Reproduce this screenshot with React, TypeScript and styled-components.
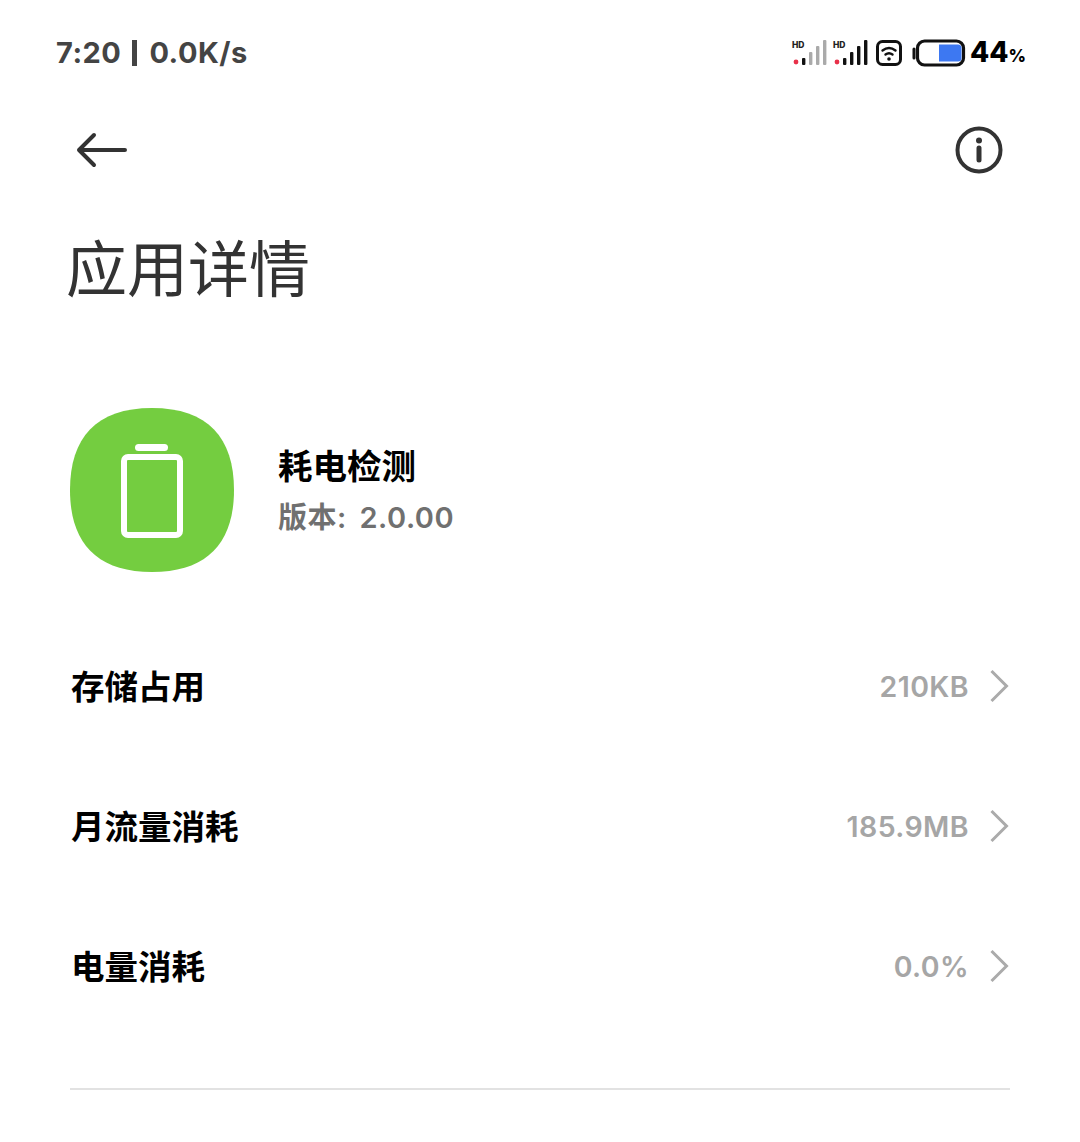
import styled, { createGlobalStyle } from "styled-components";

const GlobalStyle = createGlobalStyle`
  html, body {
    margin: 0;
    padding: 0;
    background: #fff;
    font-family: Inter, "Noto Sans CJK SC", sans-serif;
  }
`;

const FONT = `Inter, "Noto Sans CJK SC", sans-serif`;
const CJK = `"Noto Sans CJK SC", sans-serif`;

const Page = styled.div`
  width: 1080px;
  height: 1142px;
  background: #fff;
  overflow: hidden;
  box-sizing: border-box;
`;

const StatusBar = styled.div`
  height: 104px;
  padding: 37px 55px 0 56px;
  box-sizing: border-box;
  display: flex;
  justify-content: space-between;
  align-items: flex-start;
`;

const Clock = styled.div`
  display: flex;
  align-items: center;
  font-family: ${FONT};
  font-size: 29px;
  line-height: 32px;
  font-weight: 700;
  color: #444;
  letter-spacing: 0.5px;
  white-space: pre;
`;

const ClockBar = styled.span`
  width: 5px;
  height: 26px;
  margin: 0 12px 0 11px;
  background: #444;
`;

const StatusIcons = styled.div`
  display: flex;
  align-items: center;
  height: 32px;
`;

const IconSlot = styled.div<{ $left: number }>`
  display: flex;
  margin-left: ${(p) => p.$left}px;
`;

const BatteryText = styled.div`
  width: 55px;
  font-family: ${FONT};
  font-size: 28px;
  line-height: 32px;
  font-weight: 800;
  color: #000;
  margin-left: 4px;
  padding-top: 2px;
  white-space: nowrap;
  span {
    font-size: 17px;
  }
`;

const NavBar = styled.div`
  height: 92px;
  padding: 0 77px 0 76px;
  display: flex;
  justify-content: space-between;
  align-items: center;
  box-sizing: border-box;
`;

const Title = styled.h1`
  margin: 0;
  padding: 26px 0 0 66px;
  font-family: ${CJK};
  font-size: 61px;
  line-height: 88px;
  font-weight: 400;
  color: #333;
`;

const AppHeader = styled.div`
  margin-top: 98px;
  padding-left: 70px;
  display: flex;
  align-items: center;
  gap: 44px;
`;

const AppName = styled.div`
  font-family: ${CJK};
  font-size: 34.5px;
  line-height: 44px;
  font-weight: 700;
  color: #000;
`;

const AppVersion = styled.div`
  font-family: ${FONT};
  font-size: 29px;
  line-height: 40px;
  font-weight: 600;
  color: #707070;
  margin-top: 12px;
  letter-spacing: 0.5px;
  word-spacing: 5px;
`;

const List = styled.div`
  margin-top: 42px;
`;

const Row = styled.div`
  height: 140px;
  padding: 0 71px 0 71px;
  display: flex;
  align-items: center;
  justify-content: space-between;
  box-sizing: border-box;
`;

const RowLabel = styled.div`
  font-family: ${CJK};
  font-size: 33.5px;
  font-weight: 700;
  color: #000;
`;

const RowValue = styled.div`
  display: flex;
  align-items: center;
  gap: 20px;
  font-family: ${FONT};
  font-size: 28.5px;
  font-weight: 600;
  color: #a6a6a6;
  letter-spacing: 0.4px;
  padding-top: 4px;
`;

const Divider = styled.div`
  height: 2px;
  margin: 54px 70px 0;
  background: #e2e2e2;
`;

function Signal({ active }: { active: boolean }) {
  const off = active ? "#111" : "#aaa";
  return (
    <svg width="36" height="28" viewBox="0 0 36 28">
      <text x="1" y="8.5" fontFamily="Inter, sans-serif" fontSize="8.5" fontWeight="800" fill="#222">
        HD
      </text>
      <circle cx="5" cy="23" r="2.4" fill="#e8304a" />
      <rect x="11" y="19" width="3.4" height="7" rx="1" fill="#111" />
      <rect x="18" y="13" width="3.4" height="13" rx="1" fill={off} />
      <rect x="25" y="7" width="3.4" height="19" rx="1" fill={off} />
      <rect x="32" y="1" width="3.4" height="25" rx="1" fill={off} />
    </svg>
  );
}

function Wifi() {
  return (
    <svg width="26" height="26" viewBox="0 0 26 26" fill="none">
      <rect x="1.5" y="1.5" width="23" height="23" rx="5" stroke="#111" strokeWidth="3" />
      <path d="M6.5 10.5c4-3.2 9-3.2 13 0" stroke="#111" strokeWidth="2.4" strokeLinecap="round" />
      <path d="M9.5 14.5c2.2-1.6 4.8-1.6 7 0" stroke="#111" strokeWidth="2.4" strokeLinecap="round" />
      <circle cx="13" cy="19" r="1.8" fill="#111" />
    </svg>
  );
}

function Battery() {
  return (
    <svg width="54" height="28" viewBox="0 0 54 28" fill="none">
      <path d="M2 10v9" stroke="#111" strokeWidth="3" strokeLinecap="round" />
      <rect x="5.5" y="2" width="46" height="24" rx="7" stroke="#111" strokeWidth="3.2" />
      <path d="M27 5.5h19a3.5 3.5 0 0 1 3.5 3.5v10a3.5 3.5 0 0 1-3.5 3.5H27z" fill="#3d78f2" />
    </svg>
  );
}

function Chevron() {
  return (
    <svg width="20" height="34" viewBox="0 0 20 34" fill="none">
      <path d="M2.5 2l15 15-15 15" stroke="#ababab" strokeWidth="3" />
    </svg>
  );
}

function AppIcon() {
  return (
    <svg width="164" height="164" viewBox="0 0 164 164">
      <path
        d="M82 0C138 0 164 30 164 82C164 134 138 164 82 164C26 164 0 134 0 82C0 30 26 0 82 0Z"
        fill="#74cd40"
      />
      <rect x="65" y="36" width="33" height="7" rx="3.5" fill="#fff" />
      <rect x="54" y="49" width="56" height="78" rx="4" fill="none" stroke="#fff" strokeWidth="6" />
    </svg>
  );
}

const rows = [
  { label: "存储占用", value: "210KB" },
  { label: "月流量消耗", value: "185.9MB" },
  { label: "电量消耗", value: "0.0%" },
];

export default function App() {
  return (
    <Page>
      <GlobalStyle />
      <StatusBar>
        <Clock>
          7:20
          <ClockBar />
          0.0K/s
        </Clock>
        <StatusIcons>
          <Signal active={false} />
          <IconSlot $left={5}>
            <Signal active />
          </IconSlot>
          <IconSlot $left={8}>
            <Wifi />
          </IconSlot>
          <IconSlot $left={10}>
            <Battery />
          </IconSlot>
          <BatteryText>
            44<span>%</span>
          </BatteryText>
        </StatusIcons>
      </StatusBar>
      <NavBar>
        <svg width="52" height="36" viewBox="0 0 52 36" fill="none">
          <path d="M49 18H3M18 3 3 18l15 15" stroke="#333" strokeWidth="4" strokeLinecap="round" strokeLinejoin="round" />
        </svg>
        <svg width="48" height="48" viewBox="0 0 48 48" fill="none">
          <circle cx="24" cy="24" r="21.5" stroke="#333" strokeWidth="4" />
          <circle cx="24" cy="14.5" r="3" fill="#333" />
          <path d="M24 22v12" stroke="#333" strokeWidth="5" strokeLinecap="round" />
        </svg>
      </NavBar>
      <Title>应用详情</Title>
      <AppHeader>
        <AppIcon />
        <div>
          <AppName>耗电检测</AppName>
          <AppVersion>版本: 2.0.00</AppVersion>
        </div>
      </AppHeader>
      <List>
        {rows.map((row) => (
          <Row key={row.label}>
            <RowLabel>{row.label}</RowLabel>
            <RowValue>
              {row.value}
              <Chevron />
            </RowValue>
          </Row>
        ))}
      </List>
      <Divider />
    </Page>
  );
}
